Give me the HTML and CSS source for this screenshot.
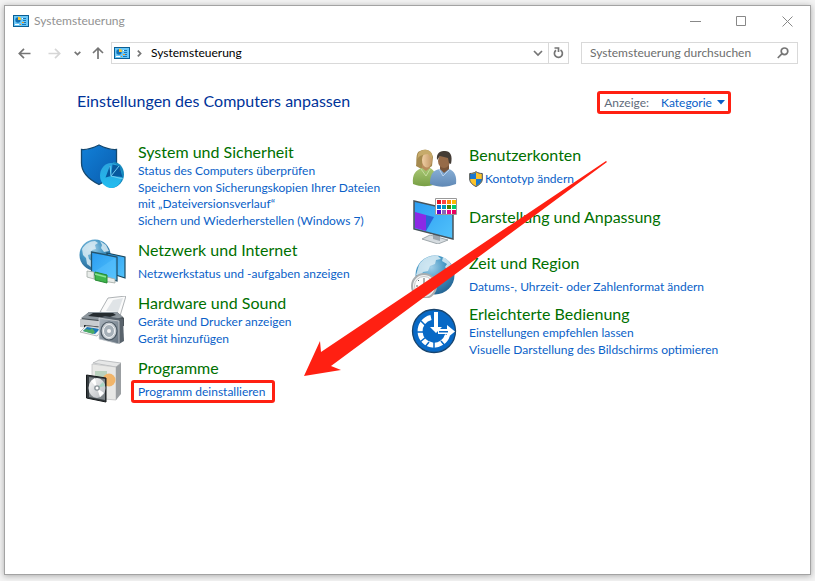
FILE: index.html
```
<!DOCTYPE html>
<html lang="de">
<head>
    <meta charset="UTF-8">
    <meta name="viewport" content="width=device-width, initial-scale=1.0">
    <title>Systemsteuerung</title>
    <link rel="stylesheet" href="styles.css">
</head>
<body>
    <svg class="defs" width="0" height="0" aria-hidden="true">
        <defs>
            <linearGradient id="blue" x1="0" y1="0" x2="1" y2="1"><stop offset="0" stop-color="#1180d8"/><stop offset="1" stop-color="#0a5cad"/></linearGradient>
            <linearGradient id="cyan" x1="0" y1="0" x2="0" y2="1"><stop offset="0" stop-color="#2ba4de"/><stop offset="1" stop-color="#22bdf0"/></linearGradient>
            <linearGradient id="screen" x1="0" y1="0" x2="1" y2="1"><stop offset="0" stop-color="#2b9cf2"/><stop offset="1" stop-color="#52c3fb"/></linearGradient>
            <radialGradient id="globe" cx="0.4" cy="0.3" r="0.75"><stop offset="0" stop-color="#a3d0e8"/><stop offset="0.5" stop-color="#4496c4"/><stop offset="1" stop-color="#22608f"/></radialGradient>
            <linearGradient id="metal" x1="0" y1="0" x2="1" y2="1"><stop offset="0" stop-color="#fafafa"/><stop offset="1" stop-color="#b4b8bd"/></linearGradient>
            <linearGradient id="speaker" x1="0" y1="0" x2="1" y2="1"><stop offset="0" stop-color="#aab4bd"/><stop offset="1" stop-color="#65727e"/></linearGradient>
            <linearGradient id="skin" x1="0" y1="0" x2="1" y2="0"><stop offset="0" stop-color="#f0cfa4"/><stop offset="1" stop-color="#c29766"/></linearGradient>
            <linearGradient id="green" x1="0" y1="0" x2="0" y2="1"><stop offset="0" stop-color="#a9c774"/><stop offset="1" stop-color="#789f45"/></linearGradient>
            <linearGradient id="shirt" x1="0" y1="0" x2="0" y2="1"><stop offset="0" stop-color="#87aed5"/><stop offset="1" stop-color="#6089b6"/></linearGradient>
        </defs>
        <symbol id="panel" viewBox="0 0 16 12">
            <rect width="16" height="12" fill="#0b5f94"/>
            <rect x="1" y="1" width="14" height="10" fill="#6bc8f8"/>
            <circle cx="5" cy="5" r="2.7" fill="#1272b6"/>
            <path d="M5 5V1.8A3 3 0 0 1 8 5z" fill="#ffc22e"/>
            <path d="M2 9h4v1H2z" fill="#fff"/>
            <path d="M7 9h1v1H7zM9 7h2v1H9z" fill="#f39a1f"/>
            <path d="M10 3h3v1h-3zM10 5h3v1h-3zM11 7h2v1h-2zM9 9h4v1H9z" fill="#1677b8"/>
            <path d="M9 3h1v1H9z" fill="#fff"/>
        </symbol>
    </svg>

    <div class="window">
        <header class="titlebar">
            <svg class="panel-icon" width="16" height="12"><use href="#panel"/></svg>
            <span class="window-title">Systemsteuerung</span>
            <button class="window-btn" aria-label="Minimieren"><svg width="11" height="11"><path d="M0 5.5h11"/></svg></button>
            <button class="window-btn" aria-label="Maximieren"><svg width="11" height="11"><path d="M.5.5h9v9h-9z"/></svg></button>
            <button class="window-btn" aria-label="Schließen"><svg width="11" height="11"><path d="M.5.5l10 10M10.500.5l-10 10"/></svg></button>
        </header>

        <nav class="toolbar">
            <button class="nav-btn" aria-label="Zurück"><svg width="13" height="11"><path d="M6 .8L1.300 5.500 6 10.200M1.500 5.500H12.500"/></svg></button>
            <button class="nav-btn off" aria-label="Vorwärts" disabled><svg width="13" height="11"><path d="M7 .8l4.700 4.700L7 10.200M11.500 5.500H.5"/></svg></button>
            <button class="nav-btn recent" aria-label="Zuletzt besucht"><svg width="7" height="5"><path d="M.7.8l2.800 2.800L6.300.8"/></svg></button>
            <button class="nav-btn up" aria-label="Nach oben"><svg width="12" height="12"><path d="M1 6l5-4.800L11 6M6 1.500V12"/></svg></button>
            <div class="address">
                <svg class="panel-icon" width="16" height="12"><use href="#panel"/></svg>
                <svg class="crumb-arrow" width="5" height="7"><path d="M.8.700l2.800 2.800L.8 6.300"/></svg>
                <span class="crumb">Systemsteuerung</span>
                <button class="address-btn" aria-label="Vorherige Orte"><svg width="10" height="7"><path d="M1 1l4 4 4-4"/></svg></button>
                <button class="address-btn refresh" aria-label="Aktualisieren"><svg width="11" height="12"><path d="M7.500 3A4 4 0 1 1 3 3.200M1.500 1h4v4"/></svg></button>
            </div>
            <div class="search">
                <input type="text" aria-label="Systemsteuerung durchsuchen" placeholder="Systemsteuerung durchsuchen">
                <svg width="12" height="12"><circle cx="7.500" cy="4.300" r="3.300"/><path d="M5 6.700L.8 11"/></svg>
            </div>
        </nav>

        <main>
            <div class="page-head">
                <h1>Einstellungen des Computers anpassen</h1>
                <div class="view">
                    <label for="viewMode">Anzeige:</label>
                    <select id="viewMode"><option>Kategorie</option></select>
                    <svg width="8" height="5"><path d="M0 0h8L4 4.500z"/></svg>
                </div>
            </div>

            <div class="categories">
                <div class="column">
                    <section class="item top">
                        <svg class="icon" viewBox="0 0 48 48">
                            <path d="M3.500 7.500C10 8 15 6 21 3c6 3 11 5 17.500 4.500v14C38.500 31 30 38 21 42.500 10 37 3.500 30 3.500 21z" fill="url(#blue)" stroke="#15486f" stroke-width="1.300"/>
                            <path d="M35 20c7 0 11 6 11 12.500S41 45 34 46l-3-.5z" fill="#1689bd"/>
                            <ellipse cx="33" cy="33.500" rx="11" ry="12.500" fill="url(#cyan)"/>
                            <path d="M33 34l-5.500 1.500L32 23.500zM33 34l1.500-11.500 7 1.500 3 11z" fill="#07599f"/>
                            <path d="M45 37l-12-3-1-10M33 34l8-10" stroke="#70cdf2" fill="none"/>
                        </svg>
                        <div class="text">
                            <h2><a href="#">System und Sicherheit</a></h2>
                            <ul>
                                <li><a href="#">Status des Computers überprüfen</a></li>
                                <li><a href="#">Speichern von Sicherungskopien Ihrer Dateien mit „Dateiversionsverlauf“</a></li>
                                <li><a href="#">Sichern und Wiederherstellen (Windows 7)</a></li>
                            </ul>
                        </div>
                    </section>
                    <section class="item solo">
                        <svg class="icon" viewBox="0 0 48 48">
                            <circle cx="17" cy="18" r="15.500" fill="url(#globe)"/>
                            <path d="M4 12c3-5 8-8 13-8l3 2-3 2 1 4-4 1-1 4-3 1 1 4 4 3-2 5-4-3-1-6-3-3zM22 4l6 4 3 6-5 1-3-4 1-3z" fill="#d9ebf3" opacity=".85"/>
                            <path d="M29 16l18 4v21l-18-6z" fill="url(#screen)" stroke="#1a485f" stroke-width="1.200"/>
                            <path d="M13.500 15L39 20v24l-25.500-7z" fill="url(#screen)" stroke="#23546e" stroke-width="1.300"/>
                            <path d="M14.500 36L37 21v21z" fill="#66c9ff" opacity=".35"/>
                            <path d="M9 34l7 1v7l-7-2zM25 39l12 3v4l-12-2z" fill="#e8ece9" stroke="#a1aaa5" stroke-width=".8"/>
                            <path d="M17 35l12 3v8l-12-3z" fill="#3eb54b" stroke="#258933"/>
                            <path d="M17 37l11 3" stroke="#8ce394" stroke-width="1.500"/>
                        </svg>
                        <div class="text">
                            <h2><a href="#">Netzwerk und Internet</a></h2>
                            <ul>
                                <li><a href="#">Netzwerkstatus und -aufgaben anzeigen</a></li>
                            </ul>
                        </div>
                    </section>
                    <section class="item">
                        <svg class="icon" viewBox="0 0 48 48">
                            <path d="M22 16L30 2l18-2-6 20z" fill="#fafafa" stroke="#9ba0a3" stroke-width=".8"/>
                            <path d="M35 4l10-2-5 14-12-1z" fill="#e0e4e7"/>
                            <path d="M2 24l9-8h28l7 6v8L28 33 2 29z" fill="#4a5258"/>
                            <path d="M11 16h28l6 5-15 4-27-3z" fill="#8d969d"/>
                            <path d="M15 17h20l3 2-9 3-19-2z" fill="#262c30"/>
                            <path d="M2 23l27 3v8L2 31z" fill="#c9cdd0"/>
                            <path d="M6 29l20 2v2L6 31z" fill="#1f2427"/>
                            <path d="M8 30l18 2-7 8-17-4z" fill="#f3f5f6" stroke="#aaa" stroke-width=".8"/>
                            <path d="M9 31l13 2-5 5-12-3z" fill="#1f77b8"/>
                            <path d="M8 33l4 1 2-2 3 4-2 2-10-3z" fill="#4dab62"/>
                            <path d="M21 22l6-2 18 3 1 22-5 3-20-5z" fill="#59636c"/>
                            <path d="M21 22l20 3v23l-20-5z" fill="url(#speaker)" stroke="#dce0e3" stroke-width=".7"/>
                            <ellipse cx="31" cy="35" rx="8" ry="9" fill="#c3cad0" stroke="#4c5963" stroke-width="1.200"/>
                            <ellipse cx="31" cy="35" rx="5.500" ry="6.500" fill="#a6b0b8" stroke="#f2f4f5"/>
                            <circle cx="31" cy="35" r="2" fill="#f5f5f5"/>
                        </svg>
                        <div class="text">
                            <h2><a href="#">Hardware und Sound</a></h2>
                            <ul>
                                <li><a href="#">Geräte und Drucker anzeigen</a></li>
                                <li><a href="#">Gerät hinzufügen</a></li>
                            </ul>
                        </div>
                    </section>
                    <section class="item solo">
                        <svg class="icon" viewBox="0 0 48 48">
                            <path d="M15 8l6-3 22 3-5 4z" fill="#e6e7e7" stroke="#a8abad" stroke-width=".7"/>
                            <path d="M14 9l24 3v33l-24-2z" fill="#e8e8e6" stroke="#babcbd" stroke-width=".7"/>
                            <path d="M38 12l5-4v31l-5 6z" fill="#9b9fa2"/>
                            <path d="M17 16h12v14H17z" fill="#b9d1bd"/>
                            <circle cx="31" cy="25" r="6.500" fill="#f1b56a"/>
                            <path d="M8.500 20L28 23v24l-19.500-4z" fill="#343a3e" stroke="#171b1d"/>
                            <path d="M11 22l16 2v21l-16-3z" fill="#7c8387"/>
                            <ellipse cx="19" cy="33" rx="8.500" ry="10" fill="url(#metal)"/>
                            <path d="M19 33l-6-7 4-3zM19 33l7 5-4 4z" fill="#fff"/>
                            <path d="M19 33l6-6 2 4z" fill="#a7d5c2"/>
                            <circle cx="19" cy="33" r="2.800" fill="#8b949a"/>
                            <circle cx="19" cy="33" r="1.500" fill="#fff"/>
                        </svg>
                        <div class="text">
                            <h2><a href="#">Programme</a></h2>
                            <ul>
                                <li><a class="marked" href="#">Programm deinstallieren</a></li>
                            </ul>
                        </div>
                    </section>
                </div>

                <div class="column">
                    <section class="item solo">
                        <svg class="icon" viewBox="0 0 48 48">
                            <path d="M7 24C8 20 6 10 11 9c5-3 12-1 13 6l-1 9-7 5z" fill="#a58a4f"/>
                            <path d="M13 20h8v10h-8z" fill="#b98d5c"/>
                            <ellipse cx="18" cy="18" rx="5" ry="7.500" fill="url(#skin)"/>
                            <path d="M8 20c0-7 6-7 11-8l4 5c2-10-10-12-14-5z" fill="#c6aa6a"/>
                            <path d="M4 42c-1-10 3-14 9-16l4 3 4-3c5 2 6 8 6 16-8 3-15 3-23 0z" fill="url(#green)"/>
                            <path d="M12 27l5 7 4-7" fill="none" stroke="#c6dc9d"/>
                            <path d="M31 23h9v8h-9z" fill="#79553a"/>
                            <ellipse cx="35" cy="19" rx="6" ry="7" fill="#966b49"/>
                            <path d="M28 18c-1-8 4-9 8-9 5 0 8 4 6 13l-2-1-1-5-8-2z" fill="#443c35"/>
                            <path d="M21 42c0-11 4-14 10-15l4 4 5-4c6 2 8 8 7 15-8 3-17 4-26 0z" fill="url(#shirt)"/>
                            <path d="M30 27l4 7 7-7" fill="none" stroke="#b8d2ec"/>
                        </svg>
                        <div class="text">
                            <h2><a href="#">Benutzerkonten</a></h2>
                            <ul>
                                <li class="with-shield">
                                    <svg width="14" height="16" viewBox="0 0 14 16">
                                        <path d="M.7 2.500C3 2.500 5 2 7 .7c2 1.300 4 1.800 6.300 1.800V8c0 3.500-3 6-6.300 7.500C3.700 14 .7 11.500.7 8z" fill="#fcc32b"/>
                                        <path d="M1 3c2.500 0 4-.5 6-1.500V8H1zM7 8h6c0 3.300-3 5.500-6 6.900z" fill="#1978d0"/>
                                        <path d="M.7 2.500C3 2.500 5 2 7 .7c2 1.300 4 1.800 6.300 1.800V8c0 3.500-3 6-6.300 7.500C3.700 14 .7 11.500.7 8z" fill="none" stroke="#444e59"/>
                                    </svg>
                                    <a href="#">Kontotyp ändern</a>
                                </li>
                            </ul>
                        </div>
                    </section>
                    <section class="item solo">
                        <svg class="icon" viewBox="0 0 48 48">
                            <path d="M13 43l8-4 18 5-10 4z" fill="#d6dce0" stroke="#8c959b" stroke-width=".8"/>
                            <path d="M24 36l7 2v7l-7-2z" fill="#9ca6ae"/>
                            <path d="M5 5L44 14v29L5 33z" fill="url(#screen)" stroke="#48535a" stroke-width="1.500"/>
                            <path d="M6 16l11 3v16L6 32z" fill="#8b29e5"/>
                            <path d="M17 19l8 2-8 14z" fill="#2864d8"/>
                            <path d="M26.500 2.500h21v16h-21z" fill="#fff" stroke="#999"/>
                            <path d="M28 4h4v4h-4z" fill="#e81123"/><path d="M33 4h4v4h-4z" fill="#ff4343"/><path d="M38 4h4v4h-4z" fill="#ff8c00"/><path d="M43 4h4v4h-4z" fill="#ffb900"/>
                            <path d="M28 9h4v4h-4z" fill="#0078d7"/><path d="M33 9h4v4h-4z" fill="#0099bc"/><path d="M38 9h4v4h-4z" fill="#498205"/><path d="M43 9h4v4h-4z" fill="#00cc6a"/>
                            <path d="M28 14h4v4h-4z" fill="#5a00cc"/><path d="M33 14h4v4h-4z" fill="#8764b8"/><path d="M38 14h4v4h-4z" fill="#e3008c"/><path d="M43 14h4v4h-4z" fill="#ea005e"/>
                        </svg>
                        <div class="text">
                            <h2><a href="#">Darstellung und Anpassung</a></h2>
                        </div>
                    </section>
                    <section class="item solo">
                        <svg class="icon" viewBox="0 0 48 48">
                            <circle cx="26" cy="25" r="19.500" fill="url(#globe)"/>
                            <path d="M10 15c4-7 12-10 19-9l3 3-5 1-1 4-5 2-2 5-5 1-3 5-4-2zM34 7c6 3 9 8 10 13l-4 2-4-5 2-3-5-3z" fill="#d9ecf4" opacity=".85"/>
                            <circle cx="15" cy="36" r="12" fill="#f2f3f3" stroke="#a9adaf" stroke-width="2"/>
                            <circle cx="15" cy="36" r="9.500" fill="#fcfcfc" stroke="#c4c7c9"/>
                            <path d="M15 28v2M15 42v2M7 36h2M21 36h2M9 30l1 1M21 30l-1 1M9 42l1-1M21 42l-1-1M15 36v-6M15 36l5-3" stroke="#5c6165" fill="none"/>
                        </svg>
                        <div class="text">
                            <h2><a href="#">Zeit und Region</a></h2>
                            <ul>
                                <li><a href="#">Datums-, Uhrzeit- oder Zahlenformat ändern</a></li>
                            </ul>
                        </div>
                    </section>
                    <section class="item">
                        <svg class="icon" viewBox="0 0 48 48">
                            <circle cx="25" cy="24" r="21.500" fill="#0869c6" stroke="#18456f" stroke-width="1.300"/>
                            <path d="M22 10.500A14 14 0 1 0 38.500 28" fill="none" stroke="#fff" stroke-width="5"/>
                            <path d="M8 25h6M11 35l6-5M25 35v7M16 40l4-5M32 34l5 6M12 14l5 5" stroke="#0869c6" stroke-width="1.500"/>
                            <path d="M25 5h4v15h4l-6 6-6-6h4zM29 22h9v-4l8 6.500-8 6.500v-4h-9z" fill="#fff"/>
                            <path d="M30 24h9v1.500h-9z" fill="#0869c6"/>
                        </svg>
                        <div class="text">
                            <h2><a href="#">Erleichterte Bedienung</a></h2>
                            <ul>
                                <li><a href="#">Einstellungen empfehlen lassen</a></li>
                                <li><a href="#">Visuelle Darstellung des Bildschirms optimieren</a></li>
                            </ul>
                        </div>
                    </section>
                </div>
            </div>
        </main>
    </div>

    <svg class="pointer" width="304" height="216" aria-hidden="true">
        <path d="M302 1L17 192 16 181 0 216 37 210 27 206 303 2z"/>
    </svg>
</body>
</html>
```
FILE: styles.css
```
* { box-sizing: border-box; }
body { margin: 0; min-height: 100vh; padding: 5px 4px 6px; display: flex; position: relative; background: #f3f3f3; font-family: Lato, "Open Sans", sans-serif; font-size: 12px; line-height: 16px; color: #000; }
h1, h2, ul { margin: 0; padding: 0; font-weight: normal; }
ul { list-style: none; }
a { color: #0a5fc8; text-decoration: none; }
a:hover { text-decoration: underline; }
button, input, select { font: inherit; border: none; padding: 0; margin: 0; background: none; border-radius: 0; }
svg { flex: none; }
.defs { position: absolute; }

.window { flex: 1; min-width: 0; background: #fff; border: 1px solid #a3a3a3; box-shadow: 0 1px 6px rgba(0,0,0,0.3); }

/* title bar */
.titlebar { display: flex; align-items: center; height: 30px; padding-left: 8px; }
.window-title { flex: 1; padding-left: 5px; color: #929292; }
.window-btn { display: flex; align-items: center; justify-content: center; width: 46px; height: 30px; }
.window-btn svg { fill: none; stroke: #888; }
.window-btn:hover { background: #e5e5e5; }

/* navigation, address and search */
.toolbar { display: flex; align-items: center; padding: 6px 12px 0 4px; }
.nav-btn { display: flex; align-items: center; justify-content: center; width: 30px; height: 22px; }
.nav-btn.recent { width: 16px; }
.nav-btn.up { width: 26px; }
.toolbar button svg, .search svg, .crumb-arrow { fill: none; stroke: #757575; stroke-width: 1.7; }
.toolbar .off svg { stroke: #d6d6d6; }
.address { display: flex; align-items: center; flex: 1; height: 22px; border: 1px solid #d9d9d9; padding-left: 2px; }
.crumb-arrow { margin-left: 7px; }
.crumb { flex: 1; padding-left: 9px; }
.address-btn { display: flex; align-items: center; justify-content: center; width: 20px; height: 20px; }
.address-btn.refresh { border-left: 1px solid #d9d9d9; }
.search { display: flex; align-items: center; width: 217px; height: 22px; margin-left: 12px; padding: 0 8px; border: 1px solid #d9d9d9; }
.search input { flex: 1; min-width: 0; outline: none; }
.search input::placeholder { color: #6d6d6d; opacity: 1; }

/* page */
main { padding: 27px 79px 20px 72px; }
.page-head { display: flex; align-items: flex-start; justify-content: space-between; }
h1 { font-size: 16px; line-height: 20px; color: #003399; }
.view { display: flex; align-items: center; height: 23px; padding: 0 3px 0 4px; border: 3px solid #ff2012; border-radius: 3px; color: #5f6b7a; }
.view select { appearance: none; margin-left: 12px; color: #0a5fc8; }
.view svg { margin-left: 5px; fill: #0a5fc8; }

.categories { display: grid; grid-template-columns: minmax(0, 331px) minmax(0, 1fr); margin-top: 28px; padding-left: 1px; }
.column { display: flex; flex-direction: column; gap: 8px; }
.column + .column { gap: 6px; }
.item { display: flex; align-items: center; gap: 12px; }
.item.top { align-items: flex-start; }
.item.top .text { padding-right: 20px; }
.icon { width: 48px; height: 48px; }
h2 { margin-bottom: 1px; font-size: 16px; line-height: 20px; }
h2 a { color: #007000; }
li + li { margin-top: 1px; }
.solo h2 { margin-bottom: 6px; }
.with-shield { display: flex; align-items: center; gap: 2px; }

/* red marks */
.marked { position: relative; }
.marked::after { content: ""; position: absolute; inset: -4px -10px -4px -7px; border: 3px solid #ff2012; border-radius: 3px; }
.pointer { position: absolute; left: 304px; top: 160px; fill: #ff2012; pointer-events: none; }
```
